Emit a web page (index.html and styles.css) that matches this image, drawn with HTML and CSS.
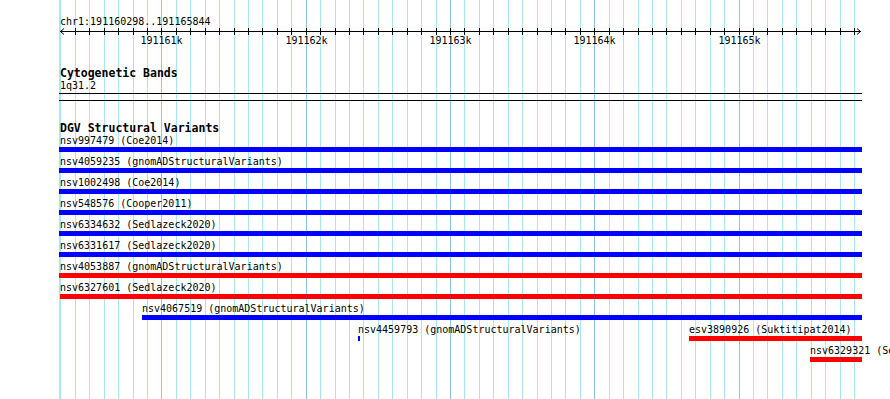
FILE: index.html
```html
<!DOCTYPE html>
<html>
<head>
<meta charset="utf-8">
<title>chr1:191160298..191165844</title>
<link rel="stylesheet" href="styles.css">
</head>
<body>
<div class="view">
  <svg class="grid" width="890" height="399" viewBox="0 0 890 399" aria-hidden="true">
    <path class="minor" d="M59.5 0V399M60.5 0V399M75.5 0V399M89.5 0V399M104.5 0V399M118.5 0V399M133.5 0V399M147.5 0V399M176.5 0V399M190.5 0V399M205.5 0V399M219.5 0V399M234.5 0V399M248.5 0V399M262.5 0V399M277.5 0V399M291.5 0V399M320.5 0V399M335.5 0V399M349.5 0V399M363.5 0V399M378.5 0V399M392.5 0V399M407.5 0V399M421.5 0V399M436.5 0V399M464.5 0V399M479.5 0V399M493.5 0V399M508.5 0V399M522.5 0V399M537.5 0V399M551.5 0V399M565.5 0V399M580.5 0V399M609.5 0V399M623.5 0V399M638.5 0V399M652.5 0V399M666.5 0V399M681.5 0V399M695.5 0V399M710.5 0V399M724.5 0V399M753.5 0V399M767.5 0V399M782.5 0V399M796.5 0V399M811.5 0V399M825.5 0V399M840.5 0V399M854.5 0V399"/>
    <path class="major" d="M161.5 0V399M306.5 0V399M450.5 0V399M594.5 0V399M739.5 0V399"/>
  </svg>

  <div class="content">
    <div class="ruler">
      <div class="locus">chr1:191160298..191165844</div>
      <svg class="scale" width="890" height="22" viewBox="0 0 890 22">
        <path class="axis" d="M60 4.5H861"/>
        <path class="axis" d="M64 1.5L60.5 4.5L64 7.5M857 1.5L860.5 4.5L857 7.5"/>
        <path class="axis" d="M75.5 1V8M89.5 1V8M104.5 1V8M118.5 1V8M133.5 1V8M147.5 1V8M161.5 1V8M176.5 1V8M190.5 1V8M205.5 1V8M219.5 1V8M234.5 1V8M248.5 1V8M262.5 1V8M277.5 1V8M291.5 1V8M306.5 1V8M320.5 1V8M335.5 1V8M349.5 1V8M363.5 1V8M378.5 1V8M392.5 1V8M407.5 1V8M421.5 1V8M436.5 1V8M450.5 1V8M464.5 1V8M479.5 1V8M493.5 1V8M508.5 1V8M522.5 1V8M537.5 1V8M551.5 1V8M565.5 1V8M580.5 1V8M594.5 1V8M609.5 1V8M623.5 1V8M638.5 1V8M652.5 1V8M666.5 1V8M681.5 1V8M695.5 1V8M710.5 1V8M724.5 1V8M739.5 1V8M753.5 1V8M767.5 1V8M782.5 1V8M796.5 1V8M811.5 1V8M825.5 1V8M840.5 1V8M854.5 1V8"/>
        <text class="tick-label" x="161.5" y="17">191161k</text>
        <text class="tick-label" x="306.5" y="17">191162k</text>
        <text class="tick-label" x="450.5" y="17">191163k</text>
        <text class="tick-label" x="594.5" y="17">191164k</text>
        <text class="tick-label" x="739.5" y="17">191165k</text>
      </svg>
    </div>

    <section class="track">
      <h2 class="track-label first">Cytogenetic Bands</h2>
      <div class="band-name">1q31.2</div>
      <div class="band"></div>
    </section>

    <section class="track">
      <h2 class="track-label">DGV Structural Variants</h2>
      <div class="features">
        <div class="row">
          <div class="feat" style="left:59px;width:803px"><div class="lbl clamp">nsv997479 (Coe2014)</div><div class="bar blue"></div></div>
        </div>
        <div class="row">
          <div class="feat" style="left:59px;width:803px"><div class="lbl clamp">nsv4059235 (gnomADStructuralVariants)</div><div class="bar blue"></div></div>
        </div>
        <div class="row">
          <div class="feat" style="left:59px;width:803px"><div class="lbl clamp">nsv1002498 (Coe2014)</div><div class="bar blue"></div></div>
        </div>
        <div class="row">
          <div class="feat" style="left:59px;width:803px"><div class="lbl clamp">nsv548576 (Cooper2011)</div><div class="bar blue"></div></div>
        </div>
        <div class="row">
          <div class="feat" style="left:59px;width:803px"><div class="lbl clamp">nsv6334632 (Sedlazeck2020)</div><div class="bar blue"></div></div>
        </div>
        <div class="row">
          <div class="feat" style="left:59px;width:803px"><div class="lbl clamp">nsv6331617 (Sedlazeck2020)</div><div class="bar blue"></div></div>
        </div>
        <div class="row">
          <div class="feat" style="left:59px;width:803px"><div class="lbl clamp">nsv4053887 (gnomADStructuralVariants)</div><div class="bar red"></div></div>
        </div>
        <div class="row">
          <div class="feat" style="left:60px;width:802px"><div class="lbl">nsv6327601 (Sedlazeck2020)</div><div class="bar red"></div></div>
        </div>
        <div class="row">
          <div class="feat" style="left:142px;width:720px"><div class="lbl">nsv4067519 (gnomADStructuralVariants)</div><div class="bar blue"></div></div>
        </div>
        <div class="row">
          <div class="feat" style="left:358px;width:2px"><div class="lbl">nsv4459793 (gnomADStructuralVariants)</div><div class="bar blue"></div></div>
          <div class="feat" style="left:689px;width:173px"><div class="lbl">esv3890926 (Suktitipat2014)</div><div class="bar red"></div></div>
        </div>
        <div class="row">
          <div class="feat" style="left:810px;width:52px"><div class="lbl">nsv6329321 (Sedlazeck2020)</div><div class="bar red"></div></div>
        </div>
      </div>
    </section>
  </div>
</div>
</body>
</html>
```

FILE: styles.css
```css
html, body {
  margin: 0;
  padding: 0;
  background: #ffffff;
  overflow: hidden;
}

.view {
  position: relative;
  width: 890px;
  height: 399px;
  overflow: hidden;
  background: #ffffff;
  font-family: "DejaVu Sans Mono", "Liberation Mono", monospace;
  font-size: 10px;
  color: #000000;
}

.grid {
  position: absolute;
  top: 0;
  left: 0;
  display: block;
  shape-rendering: crispEdges;
}

.grid .minor {
  stroke: #aae6ef;
  stroke-width: 1;
  fill: none;
}

.grid .major {
  stroke: #8cc6ea;
  stroke-width: 1;
  fill: none;
}

.content {
  position: relative;
}

.ruler {
  padding-top: 16px;
}

.locus {
  margin-left: 60px;
  line-height: 11px;
  white-space: nowrap;
}

.scale {
  display: block;
}

.scale .axis {
  stroke: #000000;
  stroke-width: 1;
  fill: none;
}

.scale .tick-label {
  font-family: "DejaVu Sans Mono", "Liberation Mono", monospace;
  font-size: 10px;
  fill: #000000;
  text-anchor: middle;
}

.track-label {
  margin: 21px 0 0 60px;
  font-size: 11.5px;
  font-weight: bold;
  line-height: 13px;
  white-space: nowrap;
}

.track-label.first {
  margin-top: 18px;
}

.band-name {
  margin-left: 60px;
  line-height: 11px;
}

.band {
  margin: 2px 0 0 59px;
  width: 803px;
  height: 6px;
  border-top: 1px solid #000000;
  border-bottom: 1px solid #000000;
}

.features {
  display: flex;
  flex-direction: column;
}

.row {
  position: relative;
  height: 21px;
}

.feat {
  position: absolute;
  top: 0;
}

.lbl {
  line-height: 11px;
  white-space: nowrap;
}

.lbl.clamp {
  padding-left: 1px;
}

.bar {
  margin-top: 1px;
  height: 5px;
}

.bar.blue {
  background: #0000ff;
}

.bar.red {
  background: #ff0000;
}
```
